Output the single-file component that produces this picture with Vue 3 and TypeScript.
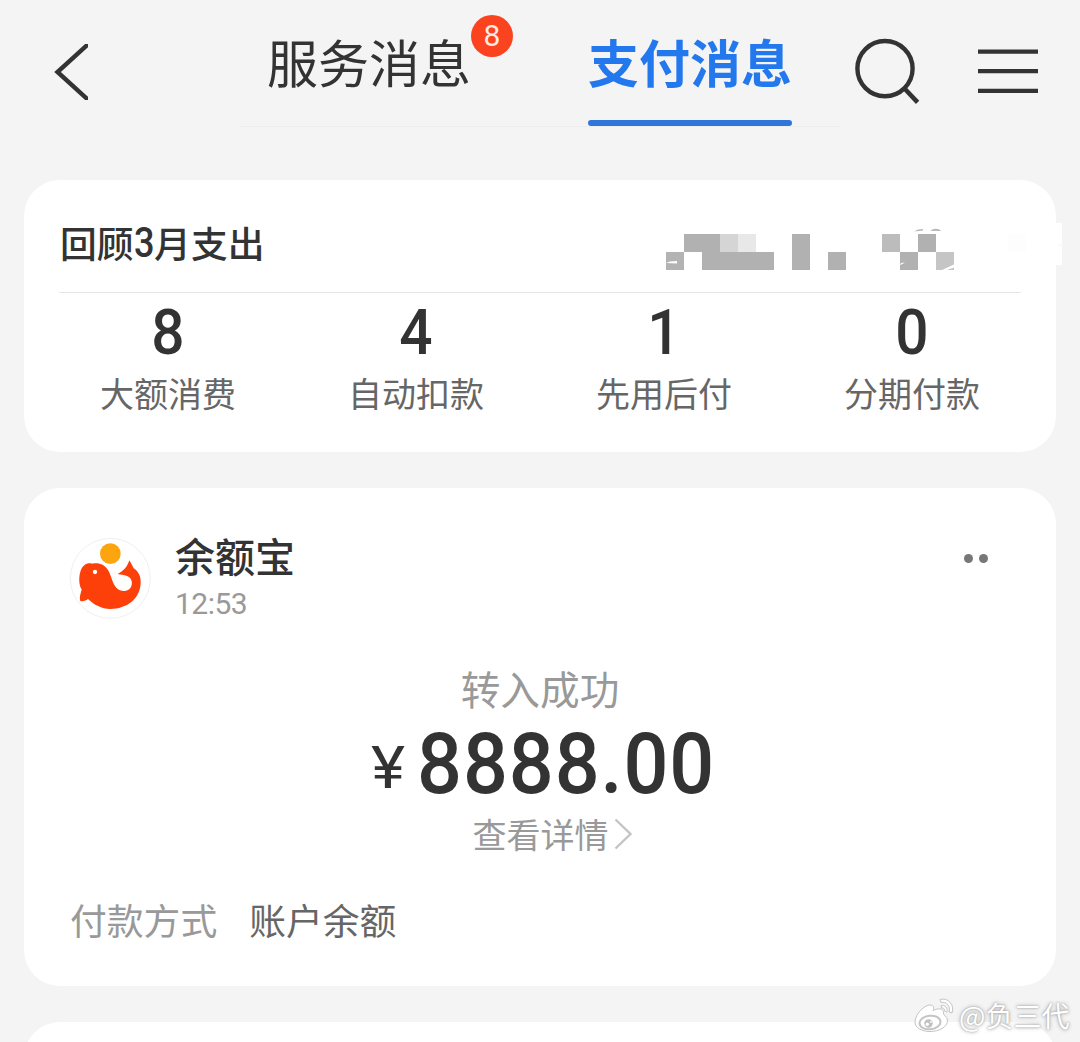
<script setup lang="ts">
interface Stat {
  value: number
  label: string
}

const stats: Stat[] = [
  { value: 8, label: '大额消费' },
  { value: 4, label: '自动扣款' },
  { value: 1, label: '先用后付' },
  { value: 0, label: '分期付款' },
]

// Mosaic cells: x, y, width, height, fill
const cells: [number, number, number, number, string][] = [
  [18, 11, 36, 18, '#b1b1b1'],
  [54, 11, 18, 18, '#d5d5d5'],
  [72, 11, 18, 18, '#e8e8e8'],
  [0, 29, 18, 18, '#b3b3b3'],
  [36, 29, 72, 18, '#b1b1b1'],
  [126, 11, 18, 36, '#b1b1b1'],
  [162, 29, 18, 18, '#b1b1b1'],
  [216, 11, 18, 18, '#bcbcbc'],
  [252, 11, 18, 18, '#b1b1b1'],
  [234, 29, 18, 18, '#b1b1b1'],
  [270, 29, 18, 18, '#c5c5c5'],
  [342, 11, 18, 18, '#fdfdfd'],
]
</script>

<template>
  <div class="screen">
    <header class="header">
      <svg class="back" width="36" height="56" viewBox="52 44 36 56">
        <path d="M90 42.5 57.5 72 90 101.5" fill="none" stroke="#333" stroke-width="4.4" />
      </svg>
      <nav class="tabs">
        <div class="tab">
          <span class="tab-text">服务消息</span>
          <span class="badge">8</span>
        </div>
        <div class="tab active">
          <span class="tab-text">支付消息</span>
        </div>
      </nav>
      <svg class="search" width="68" height="68" viewBox="854 37 68 68">
        <circle cx="885" cy="68.6" r="27.6" fill="none" stroke="#333" stroke-width="4.4" />
        <path d="M904.5 88.5 917.6 102.4" stroke="#333" stroke-width="4.6" />
      </svg>
      <svg class="menu" width="60" height="46" viewBox="978 48 60 46">
        <path d="M978 51.6H1038M978 71.2H1038M978 90.8H1038" stroke="#333" stroke-width="4.2" />
      </svg>
    </header>

    <section class="card summary">
      <div class="summary-head">
        <h2>回顾<span class="month">3</span>月支出</h2>
        <svg class="mosaic" width="396" height="47" viewBox="0 0 396 47">
          <rect v-for="(c, i) in cells" :key="i" :x="c[0]" :y="c[1]" :width="c[2]" :height="c[3]" :fill="c[4]" />
          <path d="M0 40 4 38.6 11 38V40.4ZM234 42.2 235 40 239 39.6ZM276 47 288 41.5V44.5L281 47Z" fill="#fff" />
          <path d="M248 8.4Q252 6 257 6V7.6ZM264 7.8Q270 3.6 275.5 8Z" fill="#b5b5b5" />
          <path d="M390 0H396V22L391 20 396 23.5V42H390Z" fill="#fff" />
        </svg>
      </div>
      <div class="stats">
        <div v-for="s in stats" :key="s.label" class="stat">
          <span class="stat-value">{{ s.value }}</span>
          <span class="stat-label">{{ s.label }}</span>
        </div>
      </div>
    </section>

    <section class="card message">
      <div class="message-head">
        <svg class="avatar" width="82" height="82" viewBox="28 51 246 246">
          <circle cx="152" cy="175" r="120" fill="#fff" stroke="#f0f0f0" stroke-width="3" />
          <circle cx="152" cy="101" r="31" fill="#fca50f" />
          <path
            d="M62 243C58 232 64 219 66 208C57 196 57 168 63 152C69 134 84 126 98 131C118 127 136 135 145 150C156 168 157 189 170 203C184 218 207 215 214 201C221 187 214 172 202 168C193 164 183 164 174 162C191 154 203 140 209 121C214 128 218 138 222 145C237 155 244 170 243 190C241 237 201 267 152 267C125 267 103 254 85 237C78 242 71 245 62 243Z"
            fill="#fd3f0a"
          />
          <circle cx="106" cy="156" r="6.5" fill="#fff" />
        </svg>
        <div class="who">
          <span class="name">余额宝</span>
          <span class="time">12:53</span>
        </div>
        <div class="more"><i></i><i></i></div>
      </div>

      <div class="result">
        <span class="result-title">转入成功</span>
        <div class="amount"><span class="yen">¥</span><span class="number">8888.00</span></div>
        <div class="detail">
          <span>查看详情</span>
          <svg width="20" height="32" viewBox="0 0 20 32">
            <path d="M1.5 1.5 16.5 16 1.5 30.5" fill="none" stroke="#c4c4c4" stroke-width="2.4" />
          </svg>
        </div>
      </div>

      <div class="method">
        <span class="method-key">付款方式</span>
        <span class="method-value">账户余额</span>
      </div>
    </section>

    <section class="card next"></section>

    <div class="watermark">
      <svg width="42" height="36" viewBox="0 0 42 36">
        <g fill="#fff" stroke="#c4c4c4" stroke-width="1">
          <path d="M1 25C1 17 11 7 17 8C20 8.5 20 11 19 13.5C24 11 30 11 29.5 16C29 18.5 33 19 33.5 23C34 30 25 34.5 16 34.5C8 34.5 1 31 1 25Z" />
          <path d="M26 2.5C34 0 41 8 38 16L35 15C37 9 32 4 27 5.5ZM27 8.5C31 7.5 34 11 33 15L30.5 14C31 12 29.5 10.5 27.5 11Z" />
        </g>
        <ellipse cx="16" cy="25.5" rx="10.5" ry="6.8" fill="#fff" stroke="#c4c4c4" stroke-width="2" transform="rotate(-6 16 25.5)" />
        <circle cx="14.5" cy="26.5" r="4.2" fill="#c0c0c0" />
        <circle cx="13.3" cy="27.3" r="1.7" fill="#fff" />
        <circle cx="16.8" cy="25" r=".9" fill="#fff" />
      </svg>
      <span>@负三代</span>
    </div>
  </div>
</template>

<style>
body {
  margin: 0;
  background: #f4f4f4;
}
</style>

<style scoped>
.screen {
  position: relative;
  width: 1080px;
  height: 1042px;
  overflow: hidden;
  background: #f4f4f4;
  color: #333;
  font-family: 'Noto Sans CJK SC', sans-serif;
}

svg {
  display: block;
  flex: none;
}

.header {
  display: flex;
  align-items: flex-start;
  height: 180px;
}

.back {
  margin: 44px 4px 0 52px;
}

.tabs {
  display: flex;
  box-sizing: border-box;
  width: 600px;
  height: 127px;
  margin-left: 148px;
  border-bottom: 1px solid #ededed;
}

.tab {
  position: relative;
  display: flex;
  flex-direction: column;
  align-items: center;
  width: 204px;
  height: 126px;
  margin-left: 27px;
}

.tab.active {
  margin-left: 117px;
  color: #2378ee;
  font-weight: 700;
}

.tab.active::after {
  content: '';
  width: 204px;
  height: 6px;
  margin-top: 19px;
  border-radius: 3px;
  background: #2f75da;
}

.tab-text {
  height: 80px;
  margin-top: 21px;
  font-size: 51px;
  line-height: 80px;
  white-space: nowrap;
}

.badge {
  position: absolute;
  top: 15px;
  left: 204px;
  width: 42px;
  height: 42px;
  border-radius: 50%;
  background: #fb431f;
  color: #ffe9e2;
  font: 400 30px/41px Roboto, sans-serif;
  text-align: center;
}

.search {
  margin: 37px 0 0 14px;
}

.menu {
  margin: 48px 0 0 56px;
}

.card {
  box-sizing: border-box;
  width: 1032px;
  margin: 0 24px 36px;
  border-radius: 36px;
  background: #fff;
}

.summary {
  height: 272px;
}

.summary-head {
  display: flex;
  justify-content: space-between;
  box-sizing: border-box;
  width: 962px;
  height: 113px;
  margin-left: 35px;
  border-bottom: 1px solid #e6e6e6;
}

.summary h2 {
  display: flex;
  margin: 36px 0 0 1px;
  font-size: 36.8px;
  font-weight: 500;
  line-height: 52px;
  white-space: nowrap;
}

.month {
  width: 20.5px;
  font: 500 42px/54px Roboto, sans-serif;
  transform: scaleX(0.86);
  transform-origin: left;
}

.mosaic {
  margin: 43px -41px 0 0;
}

.stats {
  display: flex;
  padding: 0 20px;
}

.stat {
  display: flex;
  flex-direction: column;
  align-items: center;
  width: 248px;
}

.stat-value {
  height: 76px;
  font: 500 63px/79px Roboto, sans-serif;
  transform: scaleX(0.93);
}

.stat-label {
  color: #666;
  font-size: 34px;
  line-height: 48px;
}

.message {
  display: flex;
  flex-direction: column;
  height: 498px;
}

.message-head {
  display: flex;
  height: 170px;
}

.avatar {
  margin: 49px 0 0 45px;
}

.who {
  display: flex;
  flex-direction: column;
  margin: 39px 0 0 24px;
}

.name {
  font-size: 40px;
  font-weight: 500;
  line-height: 56px;
}

.time {
  color: #999;
  font: 400 30px/42px Roboto, sans-serif;
  letter-spacing: -0.5px;
}

.more {
  display: flex;
  gap: 6px;
  margin: 66px 68px 0 auto;
}

.more i {
  width: 9px;
  height: 9px;
  border-radius: 50%;
  background: #777;
}

.result {
  display: flex;
  flex-direction: column;
  align-items: center;
  height: 230px;
}

.result-title {
  margin-top: 2px;
  color: #999;
  font-size: 39.7px;
  line-height: 56px;
}

.amount {
  display: flex;
  align-self: flex-start;
  height: 92px;
  margin-left: 347px;
  font-family: Roboto, sans-serif;
}

.yen {
  width: 46px;
  padding-top: 22px;
  font-size: 59px;
  font-weight: 400;
  line-height: 60px;
  transform: scaleX(1.1);
  transform-origin: left;
}

.number {
  font-size: 86px;
  font-weight: 500;
  letter-spacing: 1px;
  line-height: 95px;
  transform: scaleX(0.92);
  transform-origin: left;
}

.detail {
  display: flex;
  align-items: center;
  gap: 5px;
  margin: 2px 0 0 26px;
  color: #999;
  font-size: 34px;
  line-height: 48px;
}

.method {
  display: flex;
  gap: 32px;
  margin: 5px 0 0 46px;
  font-size: 36.8px;
  line-height: 53px;
}

.method-key {
  color: #999;
}

.method-value {
  color: #666;
}

.next {
  height: 80px;
  margin-bottom: 0;
}

.watermark {
  position: absolute;
  top: 996px;
  left: 914px;
  display: flex;
  align-items: center;
  color: #fff;
  font-size: 28px;
  line-height: 38px;
  white-space: nowrap;
}

.watermark span {
  margin-left: 3px;
  text-shadow: 0 0 2px #999, 0 0 4px #aaa;
}
</style>
